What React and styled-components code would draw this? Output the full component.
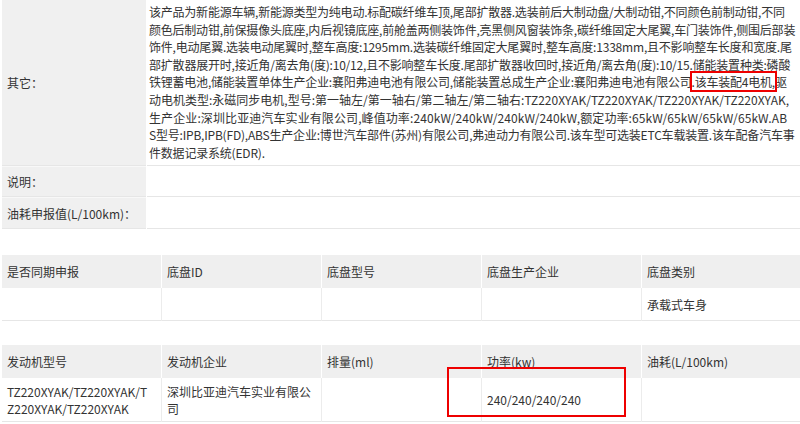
import React from "react";
import styled, { createGlobalStyle } from "styled-components";

const GlobalStyle = createGlobalStyle`
  html, body {
    margin: 0;
    padding: 0;
    background: #ffffff;
  }
  body {
    font-family: "Microsoft YaHei", "Noto Sans CJK SC", "Noto Sans", sans-serif;
    font-size: 12px;
    color: #333333;
  }
`;

const Page = styled.div`
  position: relative;
  width: 800px;
  height: 424px;
  padding-left: 2px;
  box-sizing: border-box;
  overflow: hidden;
`;

const InfoTable = styled.div`
  display: grid;
  grid-template-columns: 144px 1fr;
  column-gap: 1px;
  width: 798px;
`;

const InfoLabel = styled.div`
  display: flex;
  align-items: center;
  box-sizing: border-box;
  height: ${props => props.h}px;
  padding-left: 5px;
  background: #f0f0f0;
  border-bottom: 1px solid #e6e6e6;
  border-top: ${props => (props.first ? "0" : "1px solid #f8f8f8")};
  white-space: nowrap;
`;

const InfoValue = styled.div`
  box-sizing: border-box;
  height: ${props => props.h}px;
  padding: 3px 0 0 2px;
  background: #ffffff;
  border-bottom: 1px solid #e6e6e6;
  overflow: hidden;
  line-height: 17.6px;
`;

const Line = styled.div`
  white-space: nowrap;
  letter-spacing: ${props => props.ls || 0}px;
`;

const Mark = styled.span`
  outline: 2px solid #ee0000;
  outline-offset: 0;
`;

const Grid = styled.div`
  display: grid;
  grid-template-columns: repeat(4, 159px) 1fr;
  column-gap: 1px;
  width: 798px;
  margin-top: ${props => props.top}px;
`;

const HeadCell = styled.div`
  display: flex;
  align-items: center;
  box-sizing: border-box;
  height: 33px;
  padding-left: 5px;
  background: #efefef;
  white-space: nowrap;
`;

const DataCell = styled.div`
  display: flex;
  align-items: center;
  box-sizing: border-box;
  height: ${props => props.h}px;
  padding-left: 5px;
  background: #ffffff;
  border-bottom: 1px solid #e6e6e6;
  box-shadow: 1px 0 0 #ececec;
  line-height: 17px;
`;

const Stack = styled.div`
  display: flex;
  flex-direction: column;
  white-space: nowrap;
`;

const Callout = styled.div`
  position: absolute;
  left: 447px;
  top: 367px;
  width: 179px;
  height: 50px;
  box-sizing: border-box;
  border: 2px solid #ee0000;
  pointer-events: none;
`;

// ls: per-line tracking so the wrapped lines end where the source's do
const otherLines = [
  { ls: -0.22, text: "该产品为新能源车辆,新能源类型为纯电动.标配碳纤维车顶,尾部扩散器.选装前后大制动盘/大制动钳,不同颜色前制动钳,不同" },
  { ls: -0.22, text: "颜色后制动钳,前保摄像头底座,内后视镜底座,前舱盖两侧装饰件,亮黑侧风窗装饰条,碳纤维固定大尾翼,车门装饰件,侧围后部装" },
  { ls: -0.2, text: "饰件,电动尾翼.选装电动尾翼时,整车高度:1295mm.选装碳纤维固定大尾翼时,整车高度:1338mm,且不影响整车长度和宽度.尾" },
  { ls: -0.2, text: "部扩散器展开时,接近角/离去角(度):10/12,且不影响整车长度.尾部扩散器收回时,接近角/离去角(度):10/15.储能装置种类:磷酸" },
  { ls: -0.22, text: null },
  { ls: 0, text: "动电机类型:永磁同步电机,型号:第一轴左/第一轴右/第二轴左/第二轴右:TZ220XYAK/TZ220XYAK/TZ220XYAK/TZ220XYAK," },
  { ls: 0.1, text: "生产企业:深圳比亚迪汽车实业有限公司,峰值功率:240kW/240kW/240kW/240kW,额定功率:65kW/65kW/65kW/65kW.AB" },
  { ls: -0.2, text: "S型号:IPB,IPB(FD),ABS生产企业:博世汽车部件(苏州)有限公司,弗迪动力有限公司.该车型可选装ETC车载装置.该车配备汽车事" },
  { ls: -0.2, text: "件数据记录系统(EDR)." }
];

const chassisHead = ["是否同期申报", "底盘ID", "底盘型号", "底盘生产企业", "底盘类别"];
const chassisData = ["", "", "", "", "承载式车身"];
const engineHead = ["发动机型号", "发动机企业", "排量(ml)", "功率(kw)", "油耗(L/100km)"];

export default function App() {
  return (
    <>
      <GlobalStyle />
      <Page>
        <InfoTable>
          <InfoLabel h={166} first>其它：</InfoLabel>
          <InfoValue h={166}>
            {otherLines.map((line, i) =>
              line.text === null ? (
                <Line key={i} ls={line.ls}>
                  铁锂蓄电池,储能装置单体生产企业:襄阳弗迪电池有限公司,储能装置总成生产企业:襄阳弗迪电池有限公司
                  <Mark>.该车装配4电机,</Mark>驱
                </Line>
              ) : (
                <Line key={i} ls={line.ls}>
                  {line.text}
                </Line>
              )
            )}
          </InfoValue>
          <InfoLabel h={31}>说明：</InfoLabel>
          <InfoValue h={31} />
          <InfoLabel h={32}>油耗申报值(L/100km)：</InfoLabel>
          <InfoValue h={32} />
        </InfoTable>

        <Grid top={26}>
          {chassisHead.map(h => (
            <HeadCell key={h}>{h}</HeadCell>
          ))}
          {chassisData.map((d, i) => (
            <DataCell key={i} h={33}>
              {d}
            </DataCell>
          ))}
        </Grid>

        <Grid top={24}>
          {engineHead.map(h => (
            <HeadCell key={h}>{h}</HeadCell>
          ))}
          <DataCell h={44}>
            <Stack>
              <span>TZ220XYAK/TZ220XYAK/T</span>
              <span>Z220XYAK/TZ220XYAK</span>
            </Stack>
          </DataCell>
          <DataCell h={44}>
            <Stack>
              <span>深圳比亚迪汽车实业有限公</span>
              <span>司</span>
            </Stack>
          </DataCell>
          <DataCell h={44} />
          <DataCell h={44}>240/240/240/240</DataCell>
          <DataCell h={44} />
        </Grid>

        <Callout />
      </Page>
    </>
  );
}
